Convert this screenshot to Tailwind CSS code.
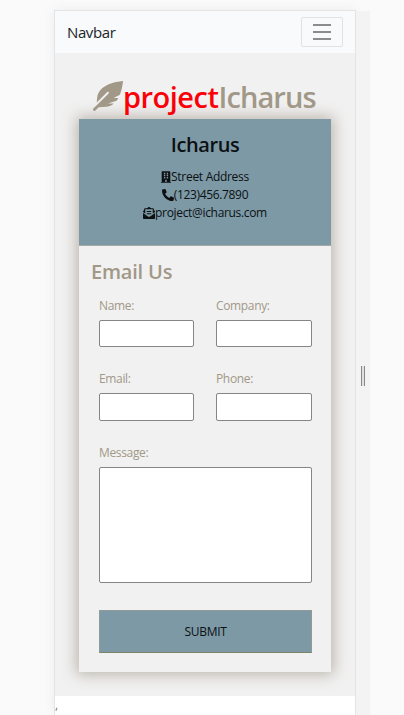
<!DOCTYPE html>
<html lang="en">
<head>
<meta charset="utf-8">
<title>projectIcharus</title>
<script src="https://cdn.jsdelivr.net/npm/@tailwindcss/browser@4"></script>
</head>
<body class="flex h-[715px] overflow-hidden bg-[#fafafa] pt-[10px] pl-[54px] font-['Open_Sans','Noto_Sans',sans-serif] text-[#a19888]">
<div class="h-[705px] w-[302px] shrink-0 border-x border-t border-[#e4e4e4] bg-white shadow-[0_0_12px_rgba(0,0,0,0.06)]">
  <nav class="flex h-[42px] items-center justify-between bg-[#f8fafc] pr-3 pl-3 text-[#212529]">
    <span class="text-[15px] tracking-[-0.4px]">Navbar</span>
    <button class="flex h-[30px] w-[42px] flex-col items-center justify-center gap-[5px] rounded-[2px] border border-[#dfe3e7]">
      <span class="h-[2px] w-[18px] bg-[#8c8c8e]"></span>
      <span class="h-[2px] w-[18px] bg-[#8c8c8e]"></span>
      <span class="h-[2px] w-[18px] bg-[#8c8c8e]"></span>
    </button>
  </nav>
  <main class="h-[643px] bg-[#f1f1f1] px-6 pt-[23px]">
    <h1 class="flex h-[43px] items-start pt-px pl-[14px] text-[29px] leading-[40px] font-semibold whitespace-nowrap">
      <svg class="mt-1 h-[30px] w-[30px] shrink-0" viewBox="0 0 512 512" fill="currentColor"><path d="M512 0C460.22 3.56 96.44 38.2 71.01 287.61c-3.09 26.66-4.84 53.44-5.99 80.24l178.87-178.69c6.25-6.25 16.4-6.25 22.65 0s6.25 16.38 0 22.63L7.04 471.03c-9.38 9.37-9.38 24.57 0 33.94 9.38 9.37 24.59 9.37 33.98 0l57.13-57.07c42.09-.14 84.15-2.53 125.96-7.36 53.48-5.44 97.02-26.47 132.58-56.54H255.74l146.79-48.88c11.25-14.89 21.37-30.71 30.45-47.12h-81.14l106.54-53.21C500.29 132.86 510.19 26.26 512 0z"/></svg>
      <span class="tracking-[-0.5px] text-[#fa0008]">project</span><span class="tracking-[-0.9px]">Icharus</span>
    </h1>
    <section class="h-[553px] w-[252px] shadow-[0_0_14px_2px_rgba(105,88,65,0.42)]">
      <header class="flex h-[127px] flex-col items-center border-b border-[#a5aaa5] bg-[#7c99a5] pt-[11px] text-[#0c1013]">
        <h2 class="h-[38px] text-[20px] leading-[30px] font-semibold tracking-[-0.4px]">Icharus</h2>
        <p class="flex h-[18px] items-center text-[12px] tracking-[-0.3px] whitespace-nowrap">
          <svg class="h-3 w-[10px]" viewBox="0 0 448 512" fill="currentColor" fill-rule="evenodd"><path d="M436 480h-20V24c0-13-11-24-24-24H56C43 0 32 11 32 24v456H12c-7 0-12 5-12 12v20h448v-20c0-7-5-12-12-12zM128 64h64v64h-64zM256 64h64v64h-64zM128 160h64v64h-64zM256 160h64v64h-64zM128 256h64v64h-64zM256 256h64v64h-64zM192 384h64v96h-64z"/></svg><span>Street Address</span>
        </p>
        <p class="flex h-[18px] items-center text-[12px] tracking-[-0.35px] whitespace-nowrap">
          <svg class="h-3 w-3" viewBox="0 0 512 512" fill="currentColor"><path d="M497.39 361.8l-112-48a24 24 0 0 0-28 6.9l-49.6 60.6A370.66 370.66 0 0 1 130.6 204.11l60.6-49.6a23.94 23.94 0 0 0 6.9-28l-48-112A24.16 24.16 0 0 0 122.6.61l-104 24A24 24 0 0 0 0 48c0 256.5 207.9 464 464 464a24 24 0 0 0 23.4-18.6l24-104a24.29 24.29 0 0 0-14.01-27.6z"/></svg><span>(123)456.7890</span>
        </p>
        <p class="flex h-[18px] items-center text-[12px] tracking-[-0.33px] whitespace-nowrap">
          <svg class="h-3 w-3" viewBox="0 0 512 512" fill="currentColor"><path d="M176 216h160c8.84 0 16-7.16 16-16v-16c0-8.84-7.16-16-16-16H176c-8.84 0-16 7.16-16 16v16c0 8.84 7.16 16 16 16zm-16 80c0 8.84 7.16 16 16 16h160c8.84 0 16-7.16 16-16v-16c0-8.84-7.16-16-16-16H176c-8.84 0-16 7.16-16 16v16zm96 121.13c-16.42 0-32.84-5.06-46.86-15.19L0 250.86V464c0 26.51 21.49 48 48 48h416c26.51 0 48-21.49 48-48V250.86L302.86 401.94c-14.02 10.12-30.44 15.19-46.86 15.19zm237.61-254.18c-8.85-6.94-17.24-13.47-29.61-22.81V96c0-26.51-21.49-48-48-48h-77.55c-3.04-2.2-5.87-4.26-9.04-6.56C312.6 29.17 279.2-.35 256 0c-23.2-.35-56.59 29.17-73.41 41.44-3.17 2.3-6 4.36-9.04 6.56H96c-26.51 0-48 21.49-48 48v44.14c-12.37 9.33-20.76 15.87-29.61 22.81A47.995 47.995 0 0 0 0 200.72v10.65l96 69.35V96h320v184.72l96-69.35v-10.65c0-14.74-6.78-28.67-18.39-37.77z"/></svg><span>project@icharus.com</span>
        </p>
      </header>
      <div class="h-[426px] bg-[#f1f1f1] px-3 pt-3">
        <h2 class="h-[39px] text-[20px] leading-[28px] font-semibold tracking-[-0.2px]">Email Us</h2>
        <form class="grid grid-cols-[96px_96px] gap-x-[21px] pl-[8px] text-[12px] leading-[18px] tracking-[-0.35px]">
          <label class="block h-[73px]"><span class="block h-[23px]">Name:</span><input class="block h-[27px] w-[95px] rounded-[2px] border border-[#858585] bg-white"></label>
          <label class="block h-[73px]"><span class="block h-[23px]">Company:</span><input class="block h-[27px] w-full rounded-[2px] border border-[#858585] bg-white"></label>
          <label class="block h-[74px]"><span class="block h-[23px]">Email:</span><input class="block h-[28px] w-[95px] rounded-[2px] border border-[#858585] bg-white"></label>
          <label class="block h-[74px]"><span class="block h-[23px]">Phone:</span><input class="block h-[28px] w-full rounded-[2px] border border-[#858585] bg-white"></label>
          <label class="col-span-2 block h-[166px]"><span class="block h-[23px]">Message:</span><textarea class="block h-[116px] w-full resize-none rounded-[2px] border border-[#858585] bg-white"></textarea></label>
          <button type="button" class="col-span-2 h-[43px] border border-t-[#8e9b98] border-r-[#8e9b98] border-b-[#7c8468] border-l-[#8e9b98] bg-[#7c99a5] text-[12px] tracking-[-0.3px] text-[#0c1013]">SUBMIT</button>
        </form>
      </div>
    </section>
  </main>
  <p class="h-[18px] text-[12px] leading-[17px] text-[#777]">,</p>
</div>
<div class="mt-px flex h-[704px] w-[14px] shrink-0 justify-center bg-[#f3f3f3] pt-[355px]">
  <div class="h-5 w-1 border-x border-[#888] bg-[#e0e0e0]"></div>
</div>
</body>
</html>
